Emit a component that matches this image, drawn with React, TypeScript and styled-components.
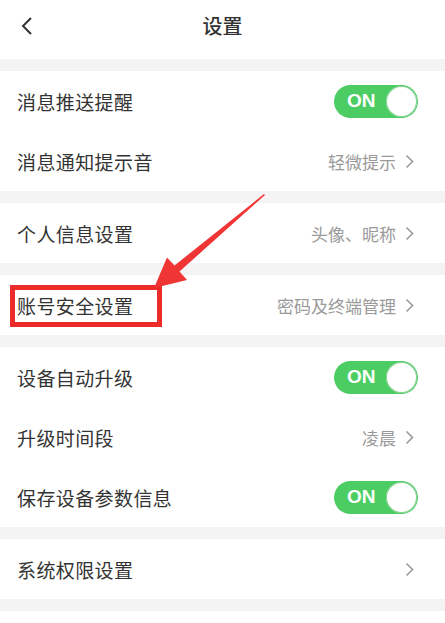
import React from 'react'
import styled, { createGlobalStyle } from 'styled-components'

const GlobalStyle = createGlobalStyle`
  html, body {
    margin: 0;
    padding: 0;
    background: #ffffff;
  }
  body {
    font-family: 'Noto Sans CJK SC', 'Noto Sans', sans-serif;
  }
`

const Page = styled.div`
  position: relative;
  width: 445px;
  min-height: 100vh;
  display: flex;
  flex-direction: column;
  gap: 12px;
  background: #f4f4f4;
  overflow: hidden;
`

const Header = styled.header`
  height: 59px;
  display: grid;
  grid-template-columns: 60px 1fr 60px;
  align-items: center;
  background: #ffffff;
`

const BackButton = styled.button`
  display: flex;
  align-items: center;
  justify-content: flex-start;
  padding: 0 0 8px 20px;
  border: none;
  background: none;
  cursor: pointer;
`

const Title = styled.h1`
  margin: 0 0 8px;
  text-align: center;
  font-size: 20px;
  font-weight: 500;
  color: #333333;
`

const Group = styled.section`
  display: flex;
  flex-direction: column;
  background: #ffffff;
`

const Filler = styled.div`
  flex: 1;
  background: #ffffff;
`

const Row = styled.div`
  position: relative;
  height: 60px;
  display: flex;
  align-items: center;
  justify-content: space-between;
  padding: 0 27px 0 17px;
`

const Label = styled.span`
  font-size: 19px;
  color: #333333;
  letter-spacing: 0.4px;
`

const Trailing = styled.div`
  display: flex;
  align-items: center;
  gap: 9px;
  color: #9a9a9a;
  font-size: 17px;
  padding-right: 4px;
`

const Toggle = styled.div<{ $on: boolean }>`
  width: 84px;
  height: 33px;
  box-sizing: border-box;
  border-radius: 17px;
  background: ${(p) => (p.$on ? '#4bcd63' : '#e5e5e5')};
  display: flex;
  align-items: center;
  justify-content: space-between;
  padding: 1px;
`

const ToggleText = styled.span`
  font-family: 'Liberation Sans', Arial, sans-serif;
  font-weight: 700;
  font-size: 19px;
  color: #ffffff;
  padding-left: 12px;
`

const Knob = styled.span`
  width: 31px;
  height: 31px;
  border-radius: 50%;
  background: #ffffff;
  box-shadow: 0 0 0 1px rgba(60, 180, 80, 0.6) inset;
`

const Highlight = styled.div`
  position: absolute;
  left: 10px;
  top: 285px;
  width: 152px;
  height: 42px;
  box-sizing: border-box;
  border: 5px solid #ee2b2b;
  pointer-events: none;
`

const ArrowLayer = styled.svg`
  position: absolute;
  left: 0;
  top: 0;
  pointer-events: none;
`

const Chevron = () => (
  <svg width="9" height="15" viewBox="0 0 9 15">
    <path d="M1.5 1.5 L7.5 7.5 L1.5 13.5" fill="none" stroke="#9a9a9a" strokeWidth="1.6" />
  </svg>
)

type Item = {
  label: string
  value?: string
  toggle?: boolean
}

const groups: Item[][] = [
  [
    { label: '消息推送提醒', toggle: true },
    { label: '消息通知提示音', value: '轻微提示' }
  ],
  [{ label: '个人信息设置', value: '头像、昵称' }],
  [{ label: '账号安全设置', value: '密码及终端管理' }],
  [
    { label: '设备自动升级', toggle: true },
    { label: '升级时间段', value: '凌晨' },
    { label: '保存设备参数信息', toggle: true }
  ],
  [{ label: '系统权限设置', value: '' }]
]

const SettingRow = ({ item }: { item: Item }) => (
  <Row>
    <Label>{item.label}</Label>
    {item.toggle ? (
      <Toggle $on>
        <ToggleText>ON</ToggleText>
        <Knob />
      </Toggle>
    ) : (
      <Trailing>
        {item.value && <span>{item.value}</span>}
        <Chevron />
      </Trailing>
    )}
  </Row>
)

const App = () => {
  return (
    <>
      <GlobalStyle />
      <Page>
        <Header>
          <BackButton aria-label="返回">
            <svg width="14" height="20" viewBox="0 0 14 20">
              <path d="M11 2 L3 10 L11 18" fill="none" stroke="#333333" strokeWidth="2" />
            </svg>
          </BackButton>
          <Title>设置</Title>
          <span />
        </Header>

        {groups.map((group, i) => (
          <Group key={i}>
            {group.map((item) => (
              <SettingRow key={item.label} item={item} />
            ))}
          </Group>
        ))}
        <Filler />

        <Highlight />
        <ArrowLayer width="445" height="623" viewBox="0 0 445 623">
          <polygon
            points="265,195 179.5,271.5 187,280 154,288 167,257.5 174.5,265.5 264,194"
            fill="#f03535"
          />
        </ArrowLayer>
      </Page>
    </>
  )
}

export default App
